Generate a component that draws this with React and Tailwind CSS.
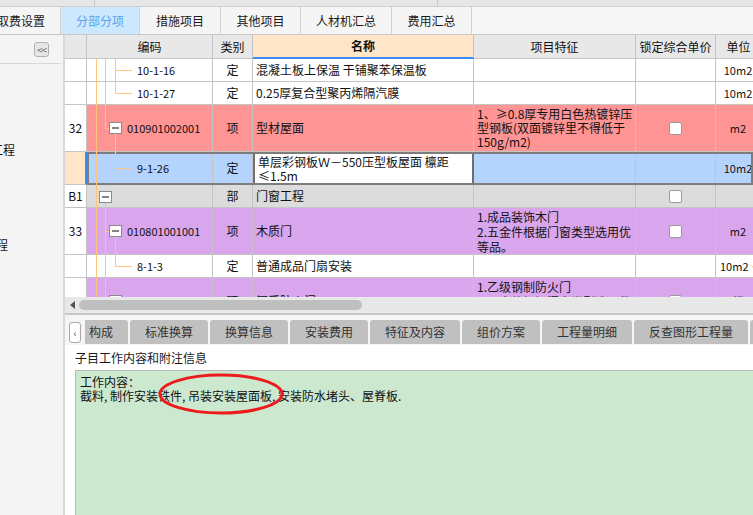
// 分部分项 screen: quota table with tree column, bottom tab strip and work-content panel.

import React from 'react';

const LINE = 'border-[#c4c4c4]';

const rows = [
  { h: 'h-[23px]', bg: 'bg-white', numBg: 'bg-white', num: '', code: '10-1-16', codePad: 'pl-[50px]', type: '定', name: ['混凝土板上保温 干铺聚苯保温板'], feat: [], lead: 'leading-[14px]', check: false, unit: '10m2' },
  { h: 'h-[23px]', bg: 'bg-white', numBg: 'bg-white', num: '', code: '10-1-27', codePad: 'pl-[50px]', type: '定', name: ['0.25厚复合型聚丙烯隔汽膜'], feat: [], lead: 'leading-[14px]', check: false, unit: '10m2' },
  { h: 'h-[47px]', bg: 'bg-[#ff9494]', numBg: 'bg-white', num: '32', code: '010901002001', codePad: 'pl-[40px]', type: '项', name: ['型材屋面'], feat: ['1、≥0.8厚专用白色热镀锌压', '型钢板(双面镀锌里不得低于', '150g/m2)'], lead: 'leading-[14px]', check: true, unit: 'm2' },
  { h: 'h-[33px]', bg: 'bg-[#b4d4fd]', numBg: 'bg-[#ffe6c8]', num: '', code: '9-1-26', codePad: 'pl-[50px]', type: '定', name: ['单层彩钢板Ｗ－550压型板屋面 檩距', '≤1.5m'], feat: [], lead: 'leading-[14px]', check: false, unit: '10m2', selected: true },
  { h: 'h-[23px]', bg: 'bg-[#dcdcdc]', numBg: 'bg-white', num: 'B1', code: '', codePad: 'pl-[40px]', type: '部', name: ['门窗工程'], feat: [], lead: 'leading-[14px]', check: true, unit: '' },
  { h: 'h-[47px]', bg: 'bg-[#d9a6ee]', numBg: 'bg-white', num: '33', code: '010801001001', codePad: 'pl-[40px]', type: '项', name: ['木质门'], feat: ['1.成品装饰木门', '2.五金件根据门窗类型选用优', '等品。'], lead: 'leading-[15px]', check: true, unit: 'm2' },
  { h: 'h-[23px]', bg: 'bg-white', numBg: 'bg-white', num: '', code: '8-1-3', codePad: 'pl-[50px]', type: '定', name: ['普通成品门扇安装'], feat: [], lead: 'leading-[14px]', check: false, unit: '10m2··', unitLeft: true },
  { h: 'h-[47px]', bg: 'bg-[#d9a6ee]', numBg: 'bg-white', num: '34', code: '010802003001', codePad: 'pl-[40px]', type: '项', name: ['钢质防火门'], feat: ['1.乙级钢制防火门', '2.五金件根据门窗类型选用优', '等品。'], lead: 'leading-[15px]', check: true, unit: '樘' },
];

const mainTabs = [
  { label: '取费设置', w: 'w-[79px] -ml-[18px]' },
  { label: '分部分项', w: 'w-[79px]', active: true },
  { label: '措施项目', w: 'w-[81px]' },
  { label: '其他项目', w: 'w-[80px]' },
  { label: '人材机汇总', w: 'w-[91px]' },
  { label: '费用汇总', w: 'w-[80px]' },
];

const subTabs = [
  { label: '标准换算', w: 'w-[78px]' },
  { label: '换算信息', w: 'w-[78px]' },
  { label: '安装费用', w: 'w-[78px]' },
  { label: '特征及内容', w: 'w-[90px]' },
  { label: '组价方案', w: 'w-[78px]' },
  { label: '工程量明细', w: 'w-[90px]' },
  { label: '反查图形工程量', w: 'w-[114px]' },
  { label: '', w: 'w-[30px]' },
];

function Checkbox() {
  return <div className="w-[13px] h-[13px] bg-white border border-[#9a9a9a] rounded-[2px]" />;
}

function Row({ r }) {
  return (
    <div className={`relative flex shrink-0 ${r.h}`}>
      <div
        className={`w-[22px] shrink-0 flex items-center justify-center border-b border-b-[#c4c4c4] ${r.numBg} ${
          r.selected ? 'border-r-2 border-r-[#3c8cf0]' : 'border-r border-r-[#c4c4c4]'
        }`}
      >
        {r.num}
      </div>
      <div className={`w-[126px] shrink-0 flex items-center text-[11px] border-r border-b ${LINE} ${r.bg} ${r.codePad}`}>{r.code}</div>
      <div className={`w-[40px] shrink-0 flex items-center justify-center border-r border-b ${LINE} ${r.bg}`}>{r.type}</div>
      <div
        className={`w-[221px] shrink-0 flex flex-col justify-center pl-[3px] leading-[14px] whitespace-nowrap overflow-hidden ${
          r.selected ? 'bg-white border-x-2 border-x-[#6f6f6f]' : `border-r border-b ${LINE} ${r.bg}`
        }`}
      >
        {r.name.map((t) => (
          <div key={t}>{t}</div>
        ))}
      </div>
      <div className={`w-[162px] shrink-0 flex flex-col justify-center pl-[3px] whitespace-nowrap overflow-hidden border-r border-b ${LINE} ${r.bg} ${r.lead}`}>
        {r.feat.map((t) => (
          <div key={t}>{t}</div>
        ))}
      </div>
      <div className={`w-[80px] shrink-0 flex items-center justify-center border-r border-b ${LINE} ${r.bg}`}>
        {r.check && <Checkbox />}
      </div>
      <div className={`w-[45px] shrink-0 flex items-center whitespace-nowrap text-[11px] border-r border-b ${LINE} ${r.bg} ${r.unitLeft ? 'pl-[4px]' : 'justify-center'}`}>
        {r.unit}
      </div>
      {r.selected && <div className="absolute left-[22px] top-0 right-0 bottom-0 border-2 border-[#7d7d7d] pointer-events-none" />}
    </div>
  );
}

// tree connector lines and expand boxes of the 编码 column
function TreeLines() {
  const c = '#ffc47e';
  const box = (x, y) => (
    <g key={`${x}-${y}`}>
      <rect x={x + 0.5} y={y + 0.5} width="12" height="11" fill="white" stroke="#8a8a8a" />
      <line x1={x + 3} y1={y + 6} x2={x + 10} y2={y + 6} stroke="#333" strokeWidth="1.2" />
    </g>
  );
  return (
    <svg className="absolute left-0 top-0 pointer-events-none" width="688" height="238">
      <g stroke={c} strokeWidth="1" fill="none">
        <path d="M31.5 0 V238" />
        <path d="M40.5 0 V69.5 H44" />
        <path d="M50.5 0 V34.5 M50.5 11.5 H67 M50.5 34.5 H67" />
        <path d="M50.5 75 V109.5 H67" />
        <path d="M31.5 137.5 H34" />
        <path d="M40.5 144 V238 M40.5 172.5 H44" />
        <path d="M50.5 178 V207.5 H67" />
      </g>
      {box(44, 63)}
      {box(34, 132)}
      {box(44, 166)}
      {box(44, 236)}
    </svg>
  );
}

function Table() {
  return (
    <div className="w-[688px] shrink-0 overflow-hidden">
      <div className="flex h-[24px] bg-[#e8e8e8]">
        <div className={`w-[22px] shrink-0 border-r border-b ${LINE}`} />
        <div className={`w-[126px] shrink-0 flex items-center justify-center border-r border-b ${LINE}`}>编码</div>
        <div className={`w-[40px] shrink-0 flex items-center justify-center border-r border-b ${LINE}`}>类别</div>
        <div className="w-[221px] shrink-0 flex items-center justify-center font-bold bg-[#ffe6c9] border-r border-r-[#c4c4c4] border-b-2 border-b-[#3c8cf0]">名称</div>
        <div className={`w-[162px] shrink-0 flex items-center justify-center border-r border-b ${LINE}`}>项目特征</div>
        <div className={`w-[80px] shrink-0 flex items-center justify-center border-r border-b ${LINE}`}>锁定综合单价</div>
        <div className={`w-[45px] shrink-0 flex items-center justify-center border-b ${LINE}`}>单位</div>
      </div>
      <div className="relative h-[238px] overflow-hidden">
        {rows.map((r, i) => (
          <Row key={i} r={r} />
        ))}
        <TreeLines />
      </div>
    </div>
  );
}

export default function App() {
  return (
    <div className="relative w-[753px] h-[515px] overflow-hidden bg-white flex flex-col text-[12px] text-[#111] font-['Noto_Sans_CJK_SC','Noto_Sans',sans-serif]">
      {/* title strip */}
      <div className="h-[7px] shrink-0 flex bg-[#e6e6e6] border-b border-[#cfcfcf]">
        <div className="w-[95px] border-r border-[#c8c8c8]" />
        <div className="w-[343px] border-r border-[#c8c8c8]" />
      </div>

      {/* main tabs */}
      <div className="h-[28px] shrink-0 flex bg-[#f7f7f7] border-b border-[#c8c8c8]">
        {mainTabs.map((t) => (
          <div
            key={t.label}
            className={`${t.w} shrink-0 flex items-center justify-center text-[12px] border-r border-[#d2d2d2] ${
              t.active ? 'bg-[#cce8ff] text-[#5aa3ea]' : 'bg-[#f5f5f5] text-[#1a1a1a]'
            }`}
          >
            {t.label}
          </div>
        ))}
      </div>

      <div className="flex flex-1 min-h-0">
        {/* left tree panel */}
        <div className="w-[65px] shrink-0 bg-[#f4f4f4] border-r-2 border-[#d8d8d8] overflow-hidden">
          <div className="h-[29px] mr-[2px] flex justify-end items-start pt-[7px] pr-[12px] border-b border-[#d8d8d8]">
            <div className="w-[15px] h-[15px] flex items-center justify-center bg-[#e6e6e6] border border-[#b0b0b0] rounded-[3px] text-[10px] leading-none tracking-[-1px] text-[#666]">
              &lt;&lt;
            </div>
          </div>
          <div className="mt-[79px] -ml-[9px] leading-[14px] whitespace-nowrap">工程</div>
          <div className="mt-[81px] -ml-[4px] leading-[14px] whitespace-nowrap">程</div>
        </div>

        <div className="flex-1 min-w-0 flex flex-col">
          <Table />

          {/* horizontal scrollbar */}
          <div className="h-[18px] shrink-0 flex items-start bg-[#e8e8e8] border-b-2 border-[#c8c8c8]">
            <div className="w-[14px] h-[16px] flex items-center justify-center">
              <div className="w-0 h-0 border-y-[4px] border-y-transparent border-r-[5px] border-r-[#555]" />
            </div>
            <div className="mt-[3px] w-[283px] h-[10px] rounded-full bg-[#bfbfbf]" />
          </div>

          {/* bottom tabs */}
          <div className="h-[30px] shrink-0 flex items-start pt-[5px] bg-[#f5f5f5] overflow-hidden">
            <div className="ml-[4px] mt-[2px] w-[12px] h-[21px] shrink-0 flex items-center justify-center bg-white border border-[#a8a8a8] rounded-[3px] text-[10px] text-[#555]">
              ‹
            </div>
            <div className="ml-[4px] w-[43px] h-[24px] shrink-0 flex items-center pl-[4px] bg-[#c0c0c0] rounded-tr-[3px] text-[#333]">
              构成
            </div>
            {subTabs.map((t, i) => (
              <div
                key={i}
                className={`${t.w} ml-[2px] h-[24px] shrink-0 flex items-center justify-center bg-[#c0c0c0] rounded-t-[3px] text-[#333]`}
              >
                {t.label}
              </div>
            ))}
          </div>

          <div className="h-[25px] shrink-0 flex items-center pl-[10px] text-[#1a1a1a]">子目工作内容和附注信息</div>

          <div className="flex-1 ml-[10px] bg-[#cce8cf] border-t border-l border-[#b8b8b8] pl-[4px] pt-[4px] leading-[14px] text-[#111]">
            <div>工作内容：</div>
            <div>截料, 制作安装铁件, 吊装安装屋面板, 安装防水堵头、屋脊板.</div>
          </div>
        </div>
      </div>

      {/* red annotation ring */}
      <svg className="absolute left-0 top-0 pointer-events-none" width="753" height="515">
        <ellipse cx="221" cy="394" rx="61" ry="19" fill="none" stroke="#ec1c1c" strokeWidth="3" />
      </svg>
    </div>
  );
}
